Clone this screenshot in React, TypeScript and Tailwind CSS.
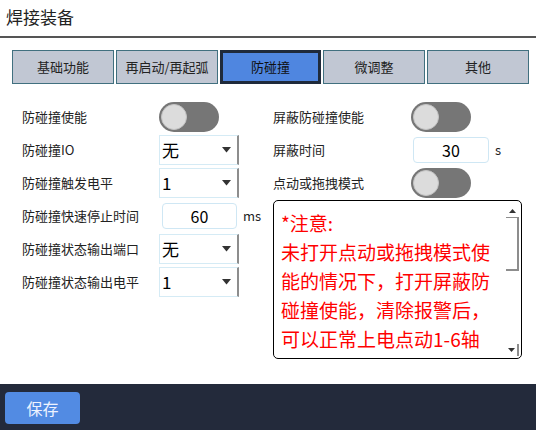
import React from "react";

const font = { fontFamily: '"Noto Sans CJK SC", "Noto Sans", sans-serif' };

function Toggle() {
  return (
    <div className="w-[60px] h-[30px] rounded-full bg-[#767676] flex items-center pl-[2px]">
      <div className="w-[26px] h-[26px] rounded-full bg-[#dcdcdc] border border-[#c4c4c4]" />
    </div>
  );
}

function Select({ value }: { value: string }) {
  return (
    <div className="w-[80px] h-[30px] bg-white border border-[#d5ebf5] border-r-2 border-r-[#8d8d8d] flex items-center justify-between pl-[2px] pr-[6px]">
      <span className="text-[17px] text-black leading-none">{value}</span>
      <svg width="9" height="6" viewBox="0 0 9 6">
        <polygon points="0,0 9,0 4.5,5.5" fill="#333" />
      </svg>
    </div>
  );
}

function NumInput({ value, w }: { value: string; w: string }) {
  return (
    <div className={`${w} h-[26px] bg-white border border-[#cfe7f4] rounded-[4px] flex items-center justify-center text-[16px] text-black`}>
      {value}
    </div>
  );
}

function Row({ label, children }: { label: string; children: React.ReactNode }) {
  return (
    <div className="h-[33px] flex items-center">
      <div className="w-[137px] text-[13px] text-[#222]">{label}</div>
      {children}
    </div>
  );
}

function RRow({ label, children }: { label: string; children: React.ReactNode }) {
  return (
    <div className="h-[33px] flex items-center">
      <div className="w-[138px] text-[13px] text-[#222]">{label}</div>
      {children}
    </div>
  );
}

export default function App() {
  const tabs = ["基础功能", "再启动/再起弧", "防碰撞", "微调整", "其他"];
  return (
    <div className="w-[536px] h-[430px] bg-white flex flex-col overflow-hidden" style={font}>
      <div className="h-[38px] border-b-2 border-[#555] flex items-center pl-[6px] pb-[2px] text-[17px] text-[#222]">
        焊接装备
      </div>
      <div className="flex gap-[2px] ml-[12px] mt-[12px]">
        {tabs.map((t, i) =>
          i === 2 ? (
            <div
              key={t}
              className="w-[101px] h-[34px] bg-[#4f86e0] border-[3px] border-[#1f2a3b] flex items-center justify-center text-[13px] text-[#111]"
            >
              {t}
            </div>
          ) : (
            <div
              key={t}
              className="w-[102px] h-[34px] bg-[#c1c7d3] border border-[#41707f] flex items-center justify-center text-[13px] text-[#222]"
            >
              {t}
            </div>
          )
        )}
      </div>
      <div className="flex pl-[22px] mt-[16px]">
        <div className="w-[251px] flex flex-col">
          <Row label="防碰撞使能">
            <Toggle />
          </Row>
          <Row label="防碰撞IO">
            <Select value="无" />
          </Row>
          <Row label="防碰撞触发电平">
            <Select value="1" />
          </Row>
          <Row label="防碰撞快速停止时间">
            <div className="flex items-center ml-[3px]">
              <NumInput value="60" w="w-[75px]" />
              <span className="ml-[6px] text-[13px] text-[#222]">ms</span>
            </div>
          </Row>
          <Row label="防碰撞状态输出端口">
            <Select value="无" />
          </Row>
          <Row label="防碰撞状态输出电平">
            <Select value="1" />
          </Row>
        </div>
        <div className="flex flex-col">
          <RRow label="屏蔽防碰撞使能">
            <Toggle />
          </RRow>
          <RRow label="屏蔽时间">
            <div className="flex items-center ml-[2px]">
              <NumInput value="30" w="w-[76px]" />
              <span className="ml-[6px] text-[13px] text-[#222]">s</span>
            </div>
          </RRow>
          <RRow label="点动或拖拽模式">
            <Toggle />
          </RRow>
          <div className="w-[249px] h-[159px] mt-[1px] border border-black rounded-[5px] flex">
            <div className="flex-1 pl-[7px] pt-[7px] text-[19px] leading-[29px] text-[#ff0000]">
              <div>*注意:</div>
              <div>未打开点动或拖拽模式使</div>
              <div>能的情况下，打开屏蔽防</div>
              <div>碰撞使能，清除报警后，</div>
              <div>可以正常上电点动1-6轴</div>
            </div>
            <div className="w-[15px] flex flex-col pt-[4px] pb-[2px] pr-[2px]">
              <div className="h-[12px] flex items-center justify-center">
                <svg width="7" height="4" viewBox="0 0 7 4">
                  <polygon points="0,4 7,4 3.5,0" fill="#333" />
                </svg>
              </div>
              <div className="h-[54px] border-t border-[#8d8d8d] border-r-2 border-b-2 border-b-[#8d8d8d] border-r-[#8d8d8d]" />
              <div className="flex-1" />
              <div className="h-[12px] flex items-center justify-center border-r-2 border-[#8d8d8d]">
                <svg width="7" height="4" viewBox="0 0 7 4">
                  <polygon points="0,0 7,0 3.5,4" fill="#333" />
                </svg>
              </div>
            </div>
          </div>
        </div>
      </div>
      <div className="mt-auto h-[46px] bg-[#232a3b] flex items-start pl-[5px] pt-[8px]">
        <div className="w-[75px] h-[32px] rounded-[4px] bg-[#528be3] flex items-center justify-center text-[16px] text-[#eef3ff]">
          保存
        </div>
      </div>
    </div>
  );
}
